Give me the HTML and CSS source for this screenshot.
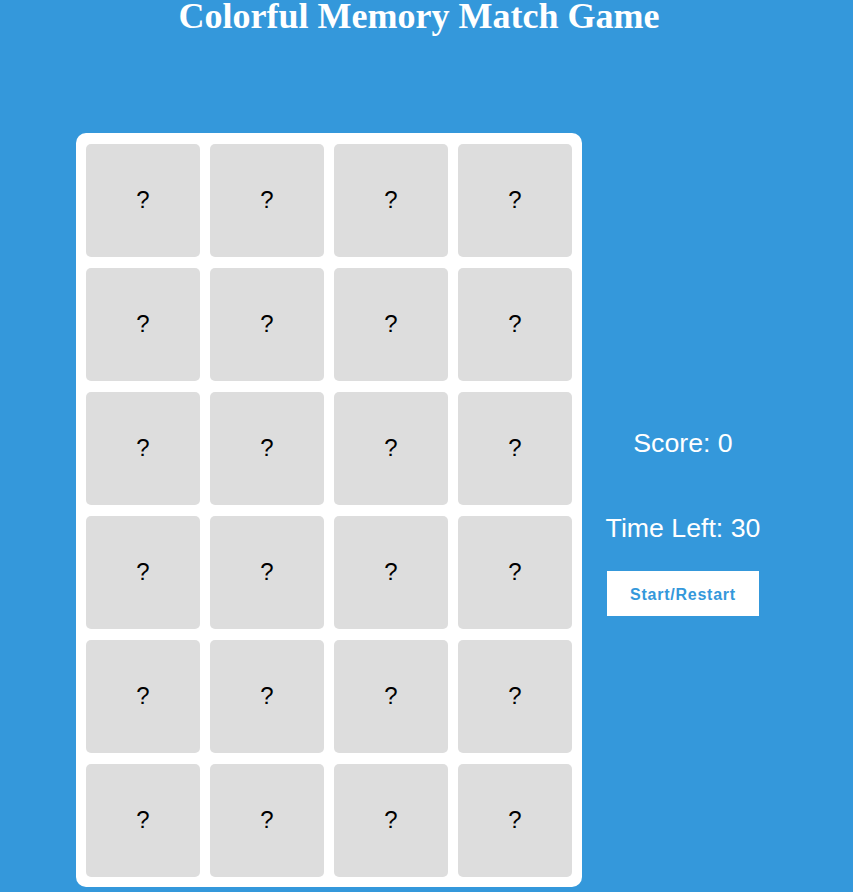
FILE: index.html
```html
<!DOCTYPE html>
<html lang="en">
<head>
<meta charset="utf-8">
<title>Colorful Memory Match Game</title>
<link rel="stylesheet" href="styles.css">
</head>
<body>
<h1 class="title">Colorful Memory Match Game</h1>
<div class="game">
  <div class="board">
    <div class="card">?</div><div class="card">?</div><div class="card">?</div><div class="card">?</div>
    <div class="card">?</div><div class="card">?</div><div class="card">?</div><div class="card">?</div>
    <div class="card">?</div><div class="card">?</div><div class="card">?</div><div class="card">?</div>
    <div class="card">?</div><div class="card">?</div><div class="card">?</div><div class="card">?</div>
    <div class="card">?</div><div class="card">?</div><div class="card">?</div><div class="card">?</div>
    <div class="card">?</div><div class="card">?</div><div class="card">?</div><div class="card">?</div>
  </div>
  <div class="panel">
    <p class="stat">Score: 0</p>
    <p class="stat">Time Left: 30</p>
    <button class="btn" type="button">Start/Restart</button>
  </div>
</div>
</body>
</html>
```
FILE: styles.css
```css
html, body {
  margin: 0;
  padding: 0;
}
body {
  background: #3498db;
  font-family: "Liberation Sans", Arial, sans-serif;
  color: #fff;
  padding: 0 15px 20px 0;
}
.title {
  margin: 0;
  text-align: center;
  font-family: "Liberation Serif", "Times New Roman", serif;
  font-size: 36px;
  font-weight: bold;
  line-height: 33px;
}
.game {
  display: flex;
  justify-content: center;
  align-items: center;
  gap: 24px;
  margin-top: 100px;
  padding-right: 2px;
}
.board {
  background: #fff;
  border-radius: 10px;
  padding: 10.5px 10px 10px 10.5px;
  display: grid;
  grid-template-columns: repeat(4, 113.5px);
  grid-auto-rows: 113.5px;
  gap: 10.5px;
}
.card {
  background: #ddd;
  border-radius: 5px;
  color: #000;
  font-size: 24px;
  display: flex;
  align-items: center;
  justify-content: center;
}
.panel {
  display: flex;
  flex-direction: column;
  align-items: center;
  margin-top: -2px;
}
.stat {
  margin: 26.7px 0;
  font-size: 26.7px;
}
.btn {
  background: #fff;
  color: #3498db;
  border: none;
  width: 152px;
  height: 45px;
  padding: 3px 0 0;
  margin-top: 1px;
  font-family: "Liberation Sans", Arial, sans-serif;
  font-weight: bold;
  font-size: 16px;
  letter-spacing: 0.75px;
  cursor: pointer;
}
```
